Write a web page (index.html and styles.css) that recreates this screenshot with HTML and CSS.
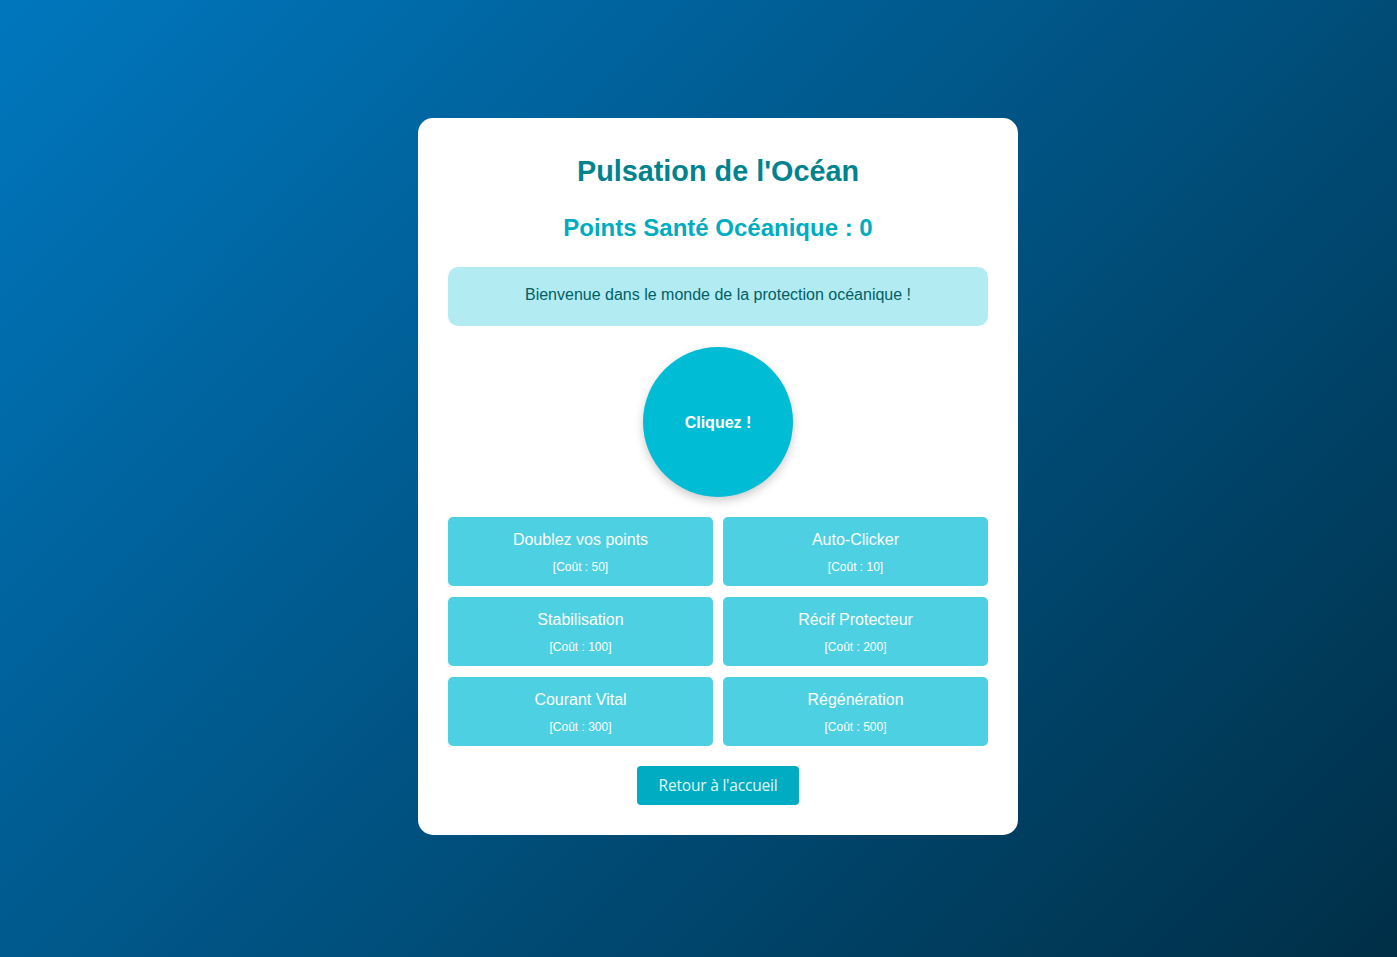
FILE: index.html
```html
<!DOCTYPE html>
<html lang="fr">
<head>
<meta charset="utf-8">
<title>Pulsation de l'Océan</title>
<link rel="stylesheet" href="styles.css">
</head>
<body>
<main class="card">
  <h1 class="title">Pulsation de l'Océan</h1>
  <h2 class="score">Points Santé Océanique : <span>0</span></h2>
  <div class="message">Bienvenue dans le monde de la protection océanique !</div>
  <div class="click-wrap">
    <button class="clicker">Cliquez !</button>
  </div>
  <div class="upgrades">
    <button class="upgrade"><span class="up-name">Doublez vos points</span><span class="up-cost">[Coût : 50]</span></button>
    <button class="upgrade"><span class="up-name">Auto-Clicker</span><span class="up-cost">[Coût : 10]</span></button>
    <button class="upgrade"><span class="up-name">Stabilisation</span><span class="up-cost">[Coût : 100]</span></button>
    <button class="upgrade"><span class="up-name">Récif Protecteur</span><span class="up-cost">[Coût : 200]</span></button>
    <button class="upgrade"><span class="up-name">Courant Vital</span><span class="up-cost">[Coût : 300]</span></button>
    <button class="upgrade"><span class="up-name">Régénération</span><span class="up-cost">[Coût : 500]</span></button>
  </div>
  <div class="back-wrap">
    <a class="back" href="#">Retour à l'accueil</a>
  </div>
</main>
</body>
</html>
```
FILE: styles.css
```css
* { box-sizing: border-box; }
html, body { margin: 0; padding: 0; }
body {
  min-height: 100vh;
  font-family: "Liberation Sans", Arial, sans-serif;
  background: linear-gradient(135deg, #0077be 0%, #002f47 100%);
  display: flex;
  align-items: center;
  justify-content: center;
  padding: 0 0 4px 39px;
}
.card {
  width: 600px;
  background: #fff;
  border-radius: 15px;
  padding: 30px;
  text-align: center;
}
.title {
  margin: 6px 0 0;
  font-size: 28.8px;
  line-height: 34px;
  font-weight: 700;
  color: #00838f;
}
.score {
  margin: 26px 0 0;
  font-size: 24px;
  line-height: 28px;
  font-weight: 700;
  color: #00acc1;
}
.message {
  margin-top: 25px;
  height: 59px;
  background: #b2ebf2;
  border-radius: 10px;
  color: #006064;
  font-size: 16px;
  display: flex;
  align-items: center;
  justify-content: center;
  padding-bottom: 3px;
}
.click-wrap {
  display: flex;
  justify-content: center;
  margin-top: 21px;
}
.clicker {
  width: 150px;
  height: 150px;
  border-radius: 50%;
  border: none;
  background: #00bcd4;
  color: #fff;
  font-family: "Liberation Sans", Arial, sans-serif;
  font-weight: 700;
  font-size: 16px;
  padding-top: 2px;
  box-shadow: 0 4px 10px rgba(0, 0, 0, 0.2);
  cursor: pointer;
}
.upgrades {
  margin-top: 20px;
  display: grid;
  grid-template-columns: 1fr 1fr;
  column-gap: 10px;
  row-gap: 11px;
}
.upgrade {
  height: 69px;
  border: none;
  border-radius: 5px;
  background: #4dd0e1;
  color: #fff;
  font-family: "Liberation Sans", Arial, sans-serif;
  display: flex;
  flex-direction: column;
  align-items: center;
  justify-content: flex-start;
  padding: 13px 0 0;
  cursor: pointer;
}
.up-name {
  font-size: 16px;
  line-height: 20px;
}
.up-cost {
  margin-top: 10px;
  font-size: 12px;
  line-height: 14px;
}
.back-wrap {
  margin-top: 20px;
  display: flex;
  justify-content: center;
}
.back {
  display: inline-flex;
  align-items: center;
  justify-content: center;
  width: 162px;
  height: 39px;
  padding-bottom: 2px;
  background: #00acc1;
  color: #e0f7fa;
  border-radius: 4px;
  text-decoration: none;
  font-family: "Open Sans", "Noto Sans", sans-serif;
  font-size: 15.5px;
  letter-spacing: -0.2px;
}
```
